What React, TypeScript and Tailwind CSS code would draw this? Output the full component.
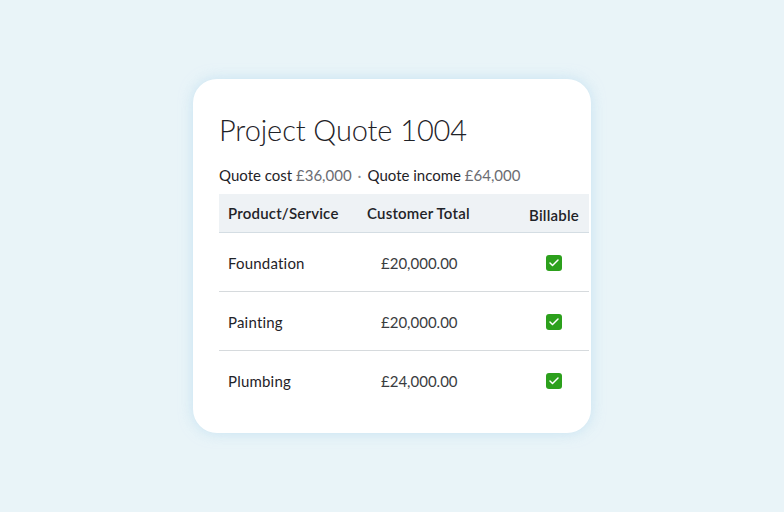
import { Check } from 'lucide-react';

type Row = { name: string; total: string };

const rows: Row[] = [
  { name: 'Foundation', total: '£20,000.00' },
  { name: 'Painting', total: '£20,000.00' },
  { name: 'Plumbing', total: '£24,000.00' },
];

function Tick() {
  return (
    <span className="inline-flex h-4 w-4 items-center justify-center rounded-[3px] bg-[#2ca01c]">
      <Check className="h-3 w-3 text-white" strokeWidth={3} />
    </span>
  );
}

export default function App() {
  return (
    <div
      className="flex h-[512px] w-[784px] items-start justify-center bg-[#e9f4f8] pt-[79px]"
      style={{ fontFamily: 'Lato, "Noto Sans", sans-serif' }}
    >
      <div className="h-[354px] w-[398px] rounded-[24px] bg-white pl-[26px] pr-[2px] pt-[32px] shadow-[0_0_14px_rgba(170,212,236,0.55)]">
        <h1 className="text-[29px] font-light leading-[38px] tracking-[-0.1px] text-[#1f2328]">Project Quote 1004</h1>
        <p className="mt-[16px] text-[15px] leading-[20px] text-[#1f2328]">
          Quote cost <span className="text-[#6b6c72]">£36,000</span>
          <span className="mx-[6px] text-[#8d9096]">·</span>
          Quote income <span className="text-[#6b6c72]">£64,000</span>
        </p>
        <table className="mt-[9px] w-full border-collapse text-[15px] text-[#1f2328]">
          <thead>
            <tr className="h-[38px] border-b border-[#d4dde3] bg-[#eef2f5]">
              <th className="w-[148px] pl-[9px] text-left align-middle font-semibold tracking-[0.2px]">Product/Service</th>
              <th className="w-[150px] pl-0 text-left align-middle font-semibold tracking-[0.2px]">Customer Total</th>
              <th className="pl-[2px] pt-[4px] text-center align-middle font-semibold tracking-[0.2px]">Billable</th>
            </tr>
          </thead>
          <tbody>
            {rows.map((r, i) => (
              <tr key={r.name} className={`h-[59px] ${i < rows.length - 1 ? 'border-b border-[#d6dadd]' : ''}`}>
                <td className="pl-[9px] pt-[3px] align-middle tracking-[0.2px]">{r.name}</td>
                <td className="pl-[14px] pt-[3px] align-middle text-[#3a3c40]">{r.total}</td>
                <td className="pl-[2px] pt-[3px] text-center align-middle">
                  <span className="inline-flex pt-[1px]">
                    <Tick />
                  </span>
                </td>
              </tr>
            ))}
          </tbody>
        </table>
      </div>
    </div>
  );
}
